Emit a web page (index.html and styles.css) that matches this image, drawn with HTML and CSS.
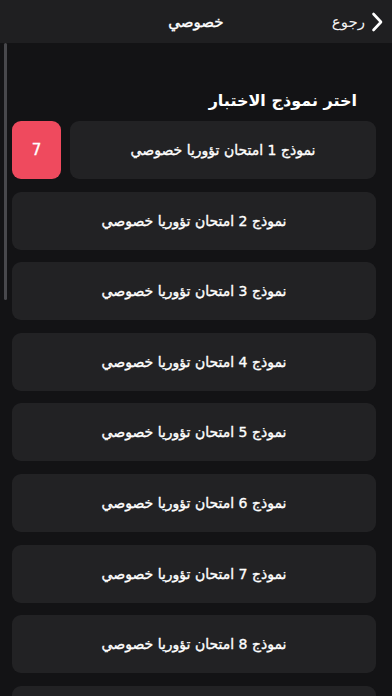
FILE: index.html
```html
<!DOCTYPE html>
<html lang="ar" dir="rtl">
<head>
<meta charset="utf-8">
<link rel="stylesheet" href="styles.css">
</head>
<body>
<header class="topbar">
  <div class="back">
    <svg class="chev" width="12" height="20" viewBox="0 0 12 20"><path d="M2.5 2 L10 10 L2.5 18" fill="none" stroke="#fff" stroke-width="2.6" stroke-linecap="round" stroke-linejoin="round"/></svg>
    <span class="back-label">رجوع</span>
  </div>
  <div class="title">خصوصي</div>
</header>
<main class="content">
  <div class="scrollbar"></div>
  <h1 class="heading">اختر نموذج الاختبار</h1>
  <div class="list">
    <div class="row">
      <div class="card">نموذج 1 امتحان تؤوريا خصوصي</div>
      <div class="badge">7</div>
    </div>
    <div class="card">نموذج 2 امتحان تؤوريا خصوصي</div>
    <div class="card">نموذج 3 امتحان تؤوريا خصوصي</div>
    <div class="card">نموذج 4 امتحان تؤوريا خصوصي</div>
    <div class="card">نموذج 5 امتحان تؤوريا خصوصي</div>
    <div class="card">نموذج 6 امتحان تؤوريا خصوصي</div>
    <div class="card">نموذج 7 امتحان تؤوريا خصوصي</div>
    <div class="card">نموذج 8 امتحان تؤوريا خصوصي</div>
    <div class="card">نموذج 9 امتحان تؤوريا خصوصي</div>
  </div>
</main>
</body>
</html>
```
FILE: styles.css
```css
html, body {
  margin: 0;
  padding: 0;
  background: #131315;
  height: 696px;
  overflow: hidden;
}
body {
  font-family: "DejaVu Sans", "Noto Sans", sans-serif;
  color: #ffffff;
}
.topbar {
  height: 43px;
  background: #1f1f21;
  position: relative;
  display: flex;
  align-items: center;
}
.back {
  display: flex;
  align-items: center;
  gap: 6px;
  padding-right: 9px;
}
.chev { display: block; }
.back-label {
  font-size: 15px;
  color: #f2f2f2;
}
.title {
  position: absolute;
  left: 0;
  right: 0;
  top: 0;
  height: 43px;
  display: flex;
  align-items: center;
  justify-content: center;
  font-size: 15px;
  font-weight: 400;
  -webkit-text-stroke: 0.4px #ffffff;
  pointer-events: none;
}
.content {
  position: relative;
  padding: 0 16px 0 16px;
}
.scrollbar {
  position: absolute;
  left: 4px;
  top: 0;
  width: 3px;
  height: 257px;
  background: #48484c;
  border-radius: 2px;
}
.heading {
  margin: 0;
  padding: 46px 19px 8px 0;
  font-size: 16px;
  font-weight: 700;
  line-height: 24px;
}
.list {
  display: flex;
  flex-direction: column;
  gap: 12.6px;
  margin-left: -4px;
}
.row {
  display: flex;
  gap: 9px;
}
.row .card { flex: 1; }
.card {
  height: 58px;
  background: #222224;
  border-radius: 9px;
  display: flex;
  align-items: center;
  justify-content: center;
  font-size: 14px;
  font-weight: 400;
  -webkit-text-stroke: 0.35px #ffffff;
  flex-shrink: 0;
}
.badge {
  width: 49px;
  height: 58px;
  background: #ef4a5e;
  border-radius: 9px;
  display: flex;
  align-items: center;
  justify-content: center;
  font-size: 15px;
  font-weight: 400;
  -webkit-text-stroke: 0.35px #ffffff;
  flex-shrink: 0;
}
```
